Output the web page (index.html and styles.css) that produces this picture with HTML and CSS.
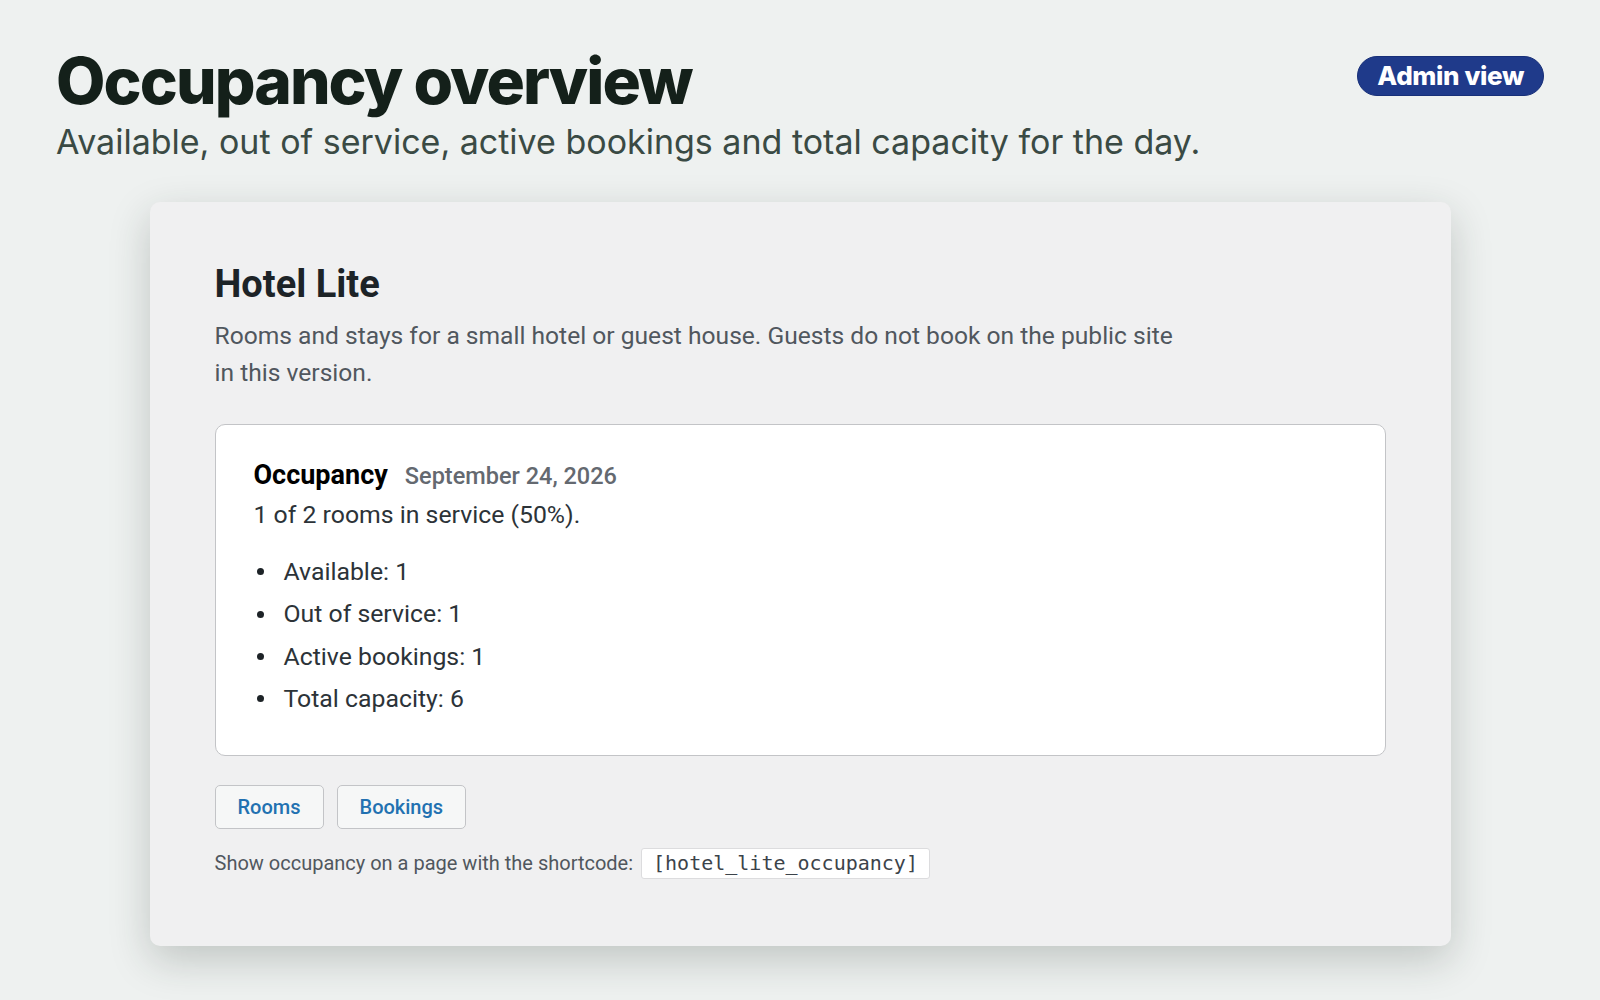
FILE: index.html
```html
<!DOCTYPE html>
<html>
<head>
    <title>Occupancy overview</title>
    <link rel="stylesheet" href="styles.css">
</head>
<body>
    <div class="page">
        <header class="page-header">
            <div class="page-heading">
                <h1>Occupancy overview</h1>
                <p class="lead">Available, out of service, active bookings and total capacity for the day.</p>
            </div>
            <span class="badge">Admin view</span>
        </header>

        <div class="card">
            <h2 class="plugin-title">Hotel Lite</h2>
            <p class="plugin-desc">Rooms and stays for a small hotel or guest house. Guests do not book on the public site in this version.</p>

            <div class="occupancy-box">
                <div class="occupancy-head">
                    <span class="occupancy-label">Occupancy</span>
                    <span class="occupancy-date">September 24, 2026</span>
                </div>
                <p class="occupancy-summary">1 of 2 rooms in service (50%).</p>
                <ul class="occupancy-list">
                    <li>Available: 1</li>
                    <li>Out of service: 1</li>
                    <li>Active bookings: 1</li>
                    <li>Total capacity: 6</li>
                </ul>
            </div>

            <div class="actions">
                <a href="#" class="button">Rooms</a>
                <a href="#" class="button">Bookings</a>
            </div>

            <p class="shortcode-note">Show occupancy on a page with the shortcode: <code>[hotel_lite_occupancy]</code></p>
        </div>
    </div>
</body>
</html>
```

FILE: styles.css
```css
body {
    margin: 0;
    background-color: #eef1f0;
    font-family: Inter, "Noto Sans", sans-serif;
    color: #14201a;
}

.page {
    padding: 46px 56px 56px;
}

.page-header {
    display: flex;
    justify-content: space-between;
    align-items: flex-start;
}

.page-heading h1 {
    margin: 0;
    font-size: 64px;
    font-weight: 800;
    line-height: 1.1;
    letter-spacing: -0.03em;
    color: #14201a;
}

.lead {
    margin: 7px 0 0;
    font-size: 34px;
    line-height: 1.1;
    color: #3a4a44;
}

.badge {
    margin-top: 10px;
    display: inline-block;
    padding: 0 19px;
    line-height: 38px;
    border: 1px solid #172f78;
    border-radius: 20px;
    background-color: #1f3a8a;
    color: #fff;
    font-size: 26px;
    font-weight: 800;
    letter-spacing: -0.015em;
}

/* plugin panel */
.card {
    max-width: 1301px;
    margin: 41px auto 0;
    box-sizing: border-box;
    padding: 60px 65px 67px;
    background-color: #f0f0f1;
    border-radius: 10px;
    box-shadow: 0 14px 40px rgba(30, 45, 38, 0.22);
    font-family: Roboto, "Noto Sans", sans-serif;
    color: #1d2327;
}

.plugin-title {
    margin: 0;
    font-size: 38px;
    font-weight: 700;
    line-height: 1.2;
    color: #1d2327;
}

.plugin-desc {
    margin: 11px 0 0;
    max-width: 975px;
    font-size: 24.6px;
    line-height: 36.7px;
    color: #50575e;
}

.occupancy-box {
    margin-top: 32px;
    padding: 32px 38px 38px;
    background-color: #fff;
    border: 1px solid #c3c4c7;
    border-radius: 10px;
}

.occupancy-head {
    display: flex;
    align-items: baseline;
    gap: 17px;
    line-height: 36px;
}

.occupancy-label {
    font-size: 27px;
    font-weight: 700;
    color: #000;
}

.occupancy-date {
    font-size: 23.5px;
    font-weight: 500;
    color: #646970;
}

.occupancy-summary {
    margin: 3px 0 0;
    font-size: 24.8px;
    line-height: 36px;
    color: #2c3338;
}

.occupancy-list {
    list-style: none;
    margin: 21px 0 0;
    padding: 0;
    color: #2c3338;
}

.occupancy-list li {
    display: flex;
    align-items: center;
    gap: 20px;
    padding-left: 3px;
    font-size: 24.8px;
    line-height: 36px;
    margin-bottom: 6.4px;
}

.occupancy-list li:last-child {
    margin-bottom: 0;
}

.occupancy-list li::before {
    content: "";
    width: 7px;
    height: 7px;
    border-radius: 50%;
    background-color: #1d2327;
}

.actions {
    display: flex;
    gap: 13px;
    margin-top: 29px;
}

.button {
    display: inline-block;
    padding: 0 22px;
    line-height: 42px;
    border: 1px solid #c3c4c7;
    border-radius: 5px;
    background-color: #f6f7f7;
    color: #2271b1;
    font-size: 20px;
    font-weight: 500;
    text-decoration: none;
}

.shortcode-note {
    margin: 19px 0 0;
    font-size: 20px;
    line-height: 31px;
    color: #50575e;
}

.shortcode-note code {
    display: inline-block;
    margin-left: 3px;
    padding: 0 11px;
    background-color: #fff;
    border: 1px solid #dcdcde;
    border-radius: 3px;
    font-family: "DejaVu Sans Mono", monospace;
    font-size: 20px;
    line-height: 29px;
    color: #3c434a;
}
```
